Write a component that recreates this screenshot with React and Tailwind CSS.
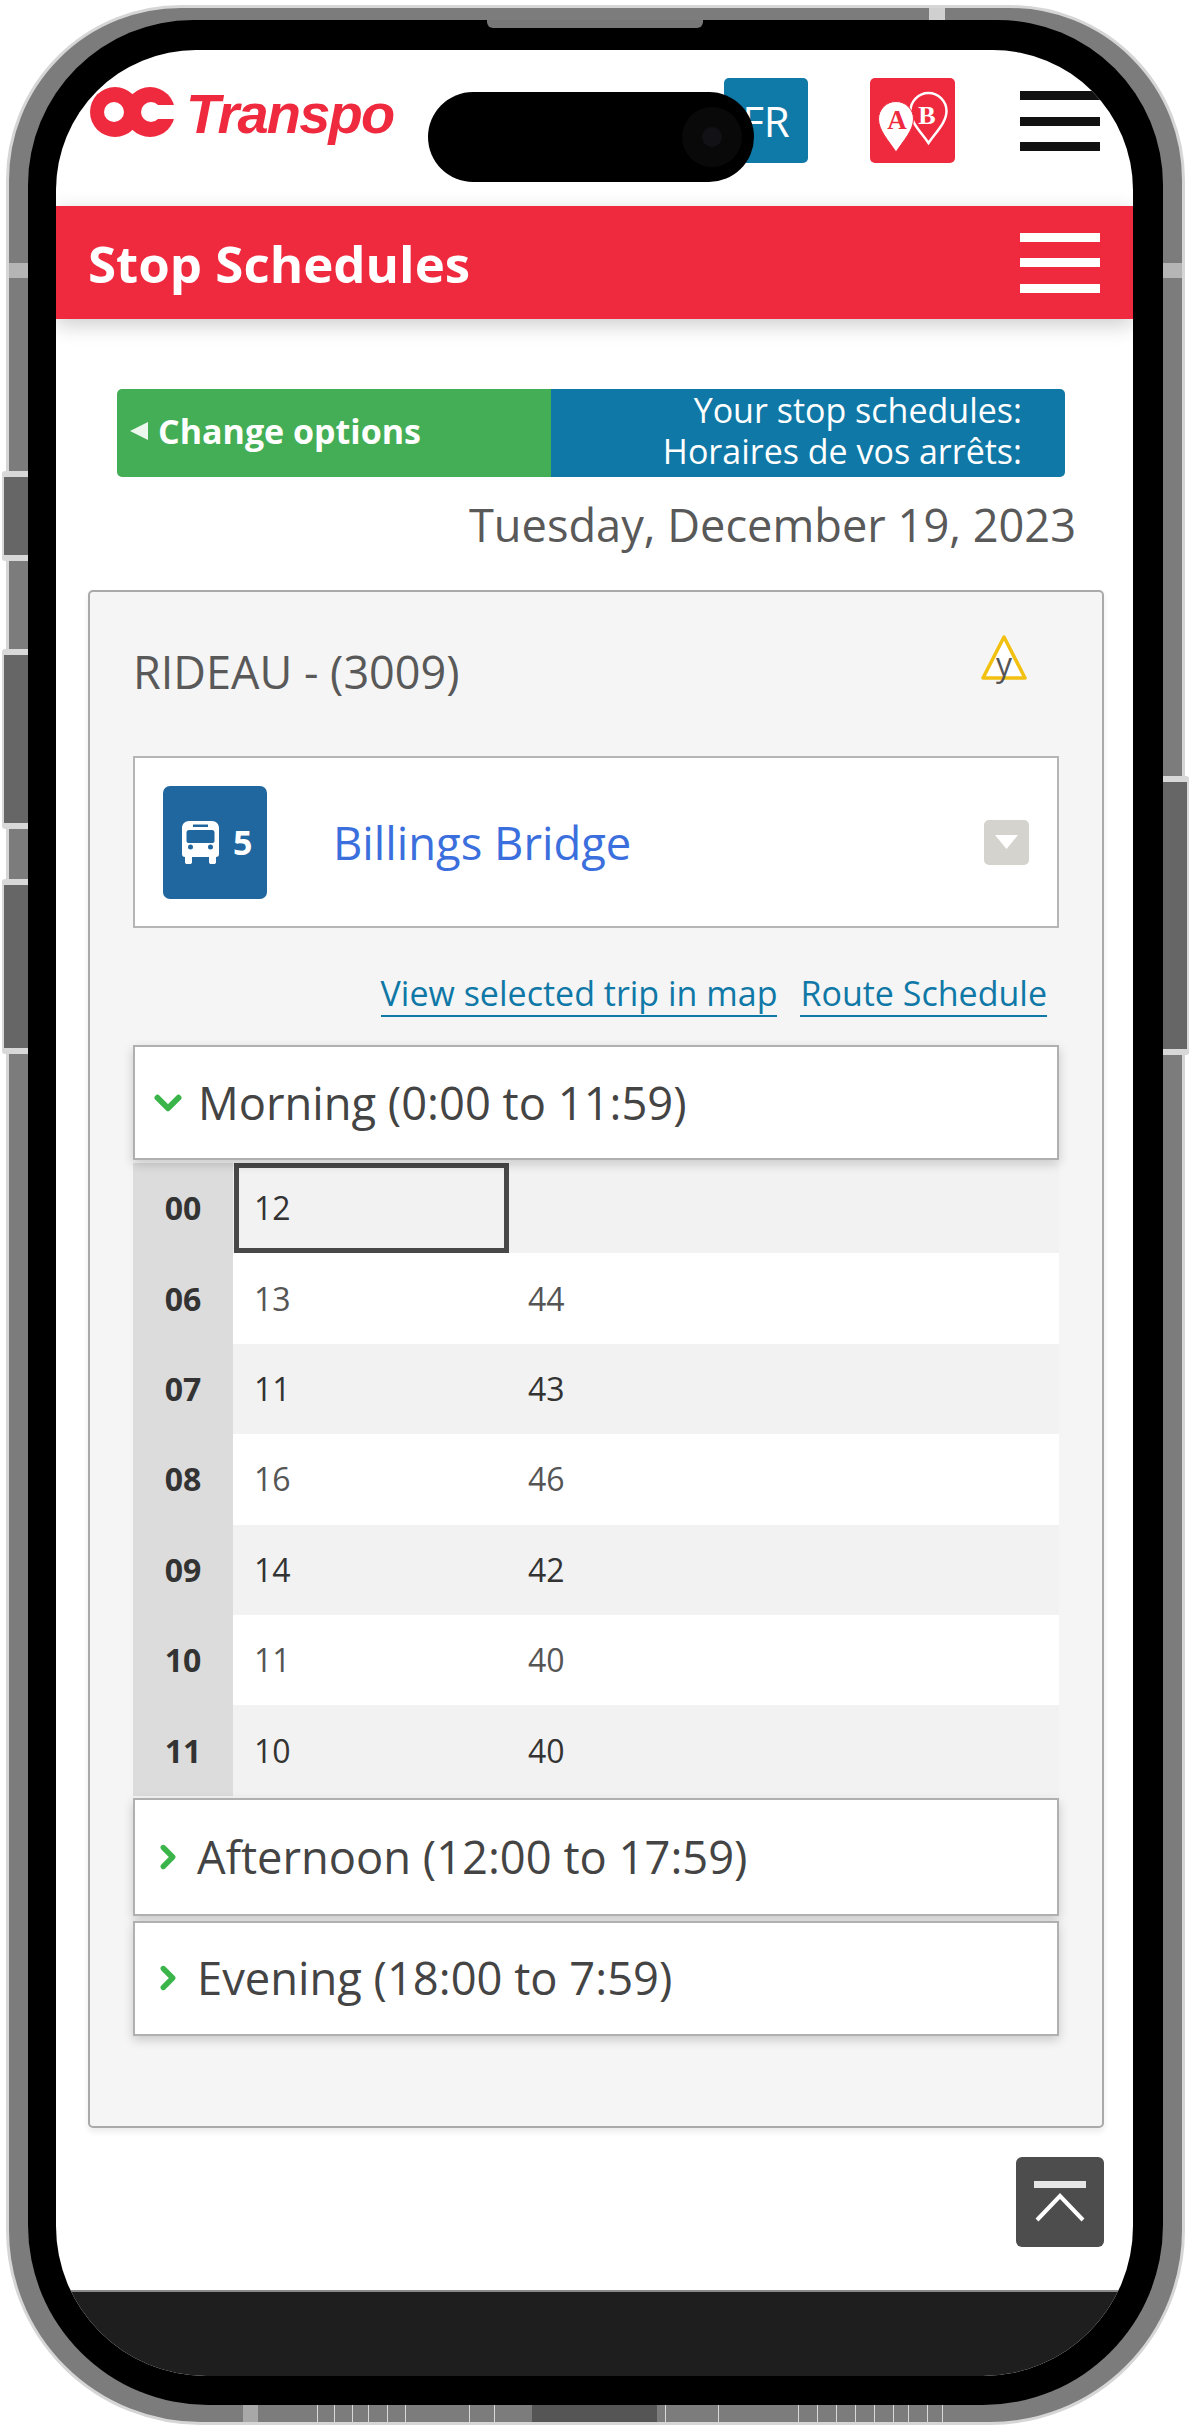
import { ChevronDown, ChevronRight } from 'lucide-react';

const rows = [
  { hour: '00', first: '12', second: '', odd: true, focused: true },
  { hour: '06', first: '13', second: '44', odd: false },
  { hour: '07', first: '11', second: '43', odd: true },
  { hour: '08', first: '16', second: '46', odd: false },
  { hour: '09', first: '14', second: '42', odd: true },
  { hour: '10', first: '11', second: '40', odd: false },
  { hour: '11', first: '10', second: '40', odd: true },
];

const leftButtons = [
  { top: 471, height: 90 },
  { top: 649, height: 180 },
  { top: 879, height: 175 },
];

const bottomLines = [317, 334, 352, 368, 387, 405, 469, 494, 665, 718, 798, 817, 836, 855, 874, 893, 908, 927, 942];

const Hamburger = ({ color }) => (
  <div className="flex flex-col gap-[16.5px] w-[80px]">
    <div className={`h-[9px] ${color}`}></div>
    <div className={`h-[9px] ${color}`}></div>
    <div className={`h-[9px] ${color}`}></div>
  </div>
);

const Logo = () => (
  <div className="flex items-start w-[304px]">
    <svg width="87" height="50" viewBox="0 0 87 50" className="shrink-0">
      <circle cx="25" cy="25" r="25" fill="#ef2a3e" />
      <circle cx="60" cy="25" r="25" fill="#ef2a3e" />
      <circle cx="24" cy="25" r="10" fill="#fff" />
      <circle cx="61" cy="25" r="10" fill="#fff" />
      <rect x="61" y="18" width="26" height="14" fill="#fff" />
    </svg>
    <span className="ml-[9px] -mt-[5px] font-['Liberation_Sans',sans-serif] font-bold italic text-[56px] leading-[64px] tracking-[-1.8px] text-[#ef2a3e]">
      Transpo
    </span>
  </div>
);

const MapPins = () => (
  <svg width="85" height="85" viewBox="0 0 85 85">
    <path
      d="M58.5 65C50 53 40.5 44 40.5 33A18 18 0 0 1 76.5 33C76.5 44 67 53 58.5 65Z"
      fill="none"
      stroke="#fff"
      strokeWidth="2.5"
    />
    <path
      d="M26 74C18 62 8.5 52 8.5 41A17.5 17.5 0 0 1 43.5 41C43.5 52 34 62 26 74Z"
      fill="#fff"
      stroke="#ef2a3e"
      strokeWidth="1"
    />
    <text x="27" y="51" textAnchor="middle" fontFamily="Liberation Serif, serif" fontWeight="700" fontSize="27" fill="#ef2a3e">
      A
    </text>
    <text x="57" y="46" textAnchor="middle" fontFamily="Liberation Serif, serif" fontWeight="700" fontSize="26" fill="#fff">
      B
    </text>
  </svg>
);

const BusIcon = () => (
  <svg width="37" height="43" viewBox="0 0 37 43">
    <path
      fill="#fff"
      fillRule="evenodd"
      d="M7 0H30C34 0 37 3 37 7V33C37 35 36 36 34 36V41C34 42.5 33 43 32 43H29C28 43 27 42.5 27 41V36H10V41C10 42.5 9 43 8 43H5C4 43 3 42.5 3 41V36C1 36 0 35 0 33V7C0 3 3 0 7 0ZM11 3.5V6H26V3.5ZM7 9C5.5 9 4.5 10 4.5 11.5V20C4.5 21.5 5.5 22 7 22H30C31.5 22 32.5 21.5 32.5 20V11.5C32.5 10 31.5 9 30 9ZM6 26A2.5 2.5 0 1 0 11 26A2.5 2.5 0 1 0 6 26ZM26 26A2.5 2.5 0 1 0 31 26A2.5 2.5 0 1 0 26 26Z"
    />
  </svg>
);

const Section = ({ label, open, height }) => (
  <div className={`flex items-center bg-white border-2 border-[#b0b0b0] shadow-[0_4px_10px_rgba(0,0,0,0.18)] relative ${height}`}>
    {open ? (
      <ChevronDown className="ml-[12px] mr-[9px] w-[42px] h-[42px] text-[#3bb54a]" strokeWidth={3.4} />
    ) : (
      <ChevronRight className="ml-[14px] mr-[10px] w-[38px] h-[38px] text-[#3bb54a]" strokeWidth={3.4} />
    )}
    <span className="text-[45.3px] leading-[54px] text-[#444]">{label}</span>
  </div>
);

const App = () => {
  return (
    <div className="w-[1191px] h-[2426px] bg-white overflow-hidden pt-[5px] pl-[6px] font-['Open_Sans',sans-serif]">
      <div className="relative w-[1179px] h-[2420px] border-[3px] border-[#d6d6d6] bg-[#7c7c7c] rounded-[175px_175px_195px_195px] pt-[12px] pb-[17px] px-[19px]">
        {/* frame details */}
        {leftButtons.map((b) => (
          <div
            key={b.top}
            className="absolute left-[-7px] w-[26px] bg-[#666] border-y-[6px] border-[#d8d8d8] border-l-2 rounded-l-[3px]"
            style={{ top: b.top - 8, height: b.height }}
          ></div>
        ))}
        <div className="absolute left-[1154px] top-[768px] w-[26px] h-[279px] bg-[#666] border-y-[6px] border-r-2 border-[#d8d8d8] rounded-r-[3px]"></div>
        <div className="absolute left-0 top-[255px] w-[19px] h-[15px] bg-[#b5b5b5]"></div>
        <div className="absolute right-0 top-[255px] w-[19px] h-[15px] bg-[#b5b5b5]"></div>
        <div className="absolute left-[920px] top-0 w-[16px] h-[12px] bg-[#d0d0d0]"></div>
        <div className="absolute left-[234px] bottom-0 w-[15px] h-[17px] bg-[#a8a8a8]"></div>
        <div className="absolute left-[523px] bottom-0 w-[125px] h-[17px] bg-[#555]"></div>
        {bottomLines.map((x) => (
          <div key={x} className="absolute bottom-0 w-[1px] h-[17px] bg-[#d8d8d8]" style={{ left: x - 9 }}></div>
        ))}

        <div className="relative w-[1135px] h-[2385px] bg-black rounded-[165px_165px_180px_180px] pt-[30px] pl-[28px] pr-[30px] pb-[29px]">
          <div className="absolute left-[459px] top-0 w-[216px] h-[8px] bg-[#777] rounded-b-[6px]"></div>

          <div className="relative w-[1077px] h-[2326px] bg-white overflow-hidden rounded-[140px_140px_150px_150px] flex flex-col">
            {/* header */}
            <div className="flex items-start h-[156px] shrink-0 pl-[34px] pt-[28px]">
              <div className="pt-[9px]">
                <Logo />
              </div>
              <div className="ml-[330px] w-[84px] h-[85px] bg-[#0f79a7] rounded-[5px] flex items-center justify-center text-[42px] text-white">
                FR
              </div>
              <div className="ml-[62px] w-[85px] h-[85px] bg-[#ef2a3e] rounded-[5px]">
                <MapPins />
              </div>
              <div className="ml-[65px] mt-[13px]">
                <Hamburger color="bg-[#111]" />
              </div>
            </div>

            <div className="absolute left-[372px] top-[42px] w-[326px] h-[90px] rounded-full bg-black flex items-center justify-end pr-[12px]">
              <div className="w-[60px] h-[60px] rounded-full bg-[#090909] flex items-center justify-center">
                <div className="w-[20px] h-[20px] rounded-full bg-[#111116]"></div>
              </div>
            </div>

            {/* title bar */}
            <div className="h-[113px] shrink-0 bg-[#ef2a3e] flex items-center justify-between pl-[32px] pr-[33px] shadow-[0_6px_20px_rgba(0,0,0,0.2)] relative">
              <h1 className="text-[51px] leading-[60px] font-bold text-white">Stop Schedules</h1>
              <Hamburger color="bg-white" />
            </div>

            {/* content */}
            <div className="flex-1 flex flex-col">
              <div className="mt-[70px] ml-[61px] w-[948px] h-[88px] flex rounded-[5px] overflow-hidden">
                <div className="w-[434px] bg-[#44ae56] flex items-center pl-[13px] pb-[5px]">
                  <svg width="18" height="18" viewBox="0 0 18 18">
                    <path d="M18 0V18L0 9Z" fill="#fff" fillOpacity="0.9" />
                  </svg>
                  <span className="ml-[10px] text-[34px] leading-[44px] font-bold text-white">Change options</span>
                </div>
                <div className="flex-1 bg-[#0f78a6] pr-[43px] pt-[1px] text-right text-[34px] leading-[41px] text-white">
                  <div>Your stop schedules:</div>
                  <div>Horaires de vos arrêts:</div>
                </div>
              </div>

              <div className="mt-[21px] mb-[38px] pr-[57px] text-right text-[45.2px] leading-[54px] text-[#595959]">
                Tuesday, December 19, 2023
              </div>

              <div className="ml-[32px] w-[1016px] h-[1538px] border-2 border-[#aaa] rounded-[5px] bg-[#f5f5f5] px-[43px] pt-[40px] shadow-[0_4px_6px_rgba(0,0,0,0.08)]">
                <div className="flex justify-between items-start h-[70px] mb-[54px]">
                  <div className="mt-[13px] text-[45px] leading-[54px] text-[#595959]">RIDEAU - (3009)</div>
                  <svg width="46" height="54" viewBox="0 0 46 54" className="mr-[32px] mt-[2px]">
                    <path d="M23 3L44 44H2Z" fill="#fff" stroke="#f2c011" strokeWidth="3.5" strokeLinejoin="round" />
                    <text x="23" y="42" textAnchor="middle" fontFamily="Open Sans, sans-serif" fontSize="32" fill="#555">
                      y
                    </text>
                  </svg>
                </div>

                <div className="h-[172px] bg-white border-2 border-[#b5b5b5] flex items-center pl-[28px] pr-[28px]">
                  <div className="w-[104px] h-[113px] bg-[#21679f] rounded-[7px] flex items-center pl-[19px]">
                    <BusIcon />
                    <span className="ml-[14px] text-[34px] leading-[44px] font-bold text-white">5</span>
                  </div>
                  <span className="ml-[66px] text-[45.4px] leading-[54px] text-[#3b6fdd]">Billings Bridge</span>
                  <div className="ml-auto w-[45px] h-[45px] bg-[#d4d3cd] rounded-[5px] flex items-center justify-center">
                    <svg width="23" height="14" viewBox="0 0 23 14">
                      <path d="M0 0H23L11.5 14Z" fill="#fff" />
                    </svg>
                  </div>
                </div>

                <div className="mt-[43px] mb-[28px] flex justify-end gap-[23px] pr-[12px] text-[34px] leading-[44px] text-[#0f78a6]">
                  <span className="border-b-2 border-[#0f78a6]">View selected trip in map</span>
                  <span className="border-b-2 border-[#0f78a6]">Route Schedule</span>
                </div>

                <Section label="Morning (0:00 to 11:59)" open height="h-[115px]" />

                <div className="mt-[3px]">
                  {rows.map((row) => (
                    <div
                      key={row.hour}
                      className={`flex h-[90.4px] text-[32px] leading-[44px] ${row.odd ? 'bg-[#f2f2f2] text-[#333]' : 'bg-white text-[#555]'}`}
                    >
                      <div className="w-[100px] bg-[#dcdcdc] flex items-center justify-center font-bold text-[#333]">{row.hour}</div>
                      <div
                        className={`w-[275px] ml-[1px] flex items-center pl-[20px] ${row.focused ? 'shadow-[inset_0_0_0_5px_#484848]' : ''}`}
                      >
                        {row.first}
                      </div>
                      <div className="flex-1 flex items-center pl-[19px]">{row.second}</div>
                    </div>
                  ))}
                </div>

                <div className="mt-[2px] flex flex-col gap-[5px]">
                  <Section label="Afternoon (12:00 to 17:59)" height="h-[118px]" />
                  <Section label="Evening (18:00 to 7:59)" height="h-[115px]" />
                </div>
              </div>

              <div className="mt-[29px] mr-[29px] self-end w-[88px] h-[90px] bg-[#4d4d4d] rounded-[6px] flex items-center justify-center">
                <svg width="52" height="42" viewBox="0 0 52 42">
                  <rect x="0" y="0" width="52" height="7" fill="#e6e6e6" />
                  <path d="M3 39L26 15L49 39" fill="none" stroke="#fff" strokeWidth="4" />
                </svg>
              </div>
            </div>

            {/* footer */}
            <div className="h-[86px] shrink-0 bg-[#1e1e1e] border-t-2 border-[#8a8a8a]"></div>
          </div>
        </div>
      </div>
    </div>
  );
};

export default App;
